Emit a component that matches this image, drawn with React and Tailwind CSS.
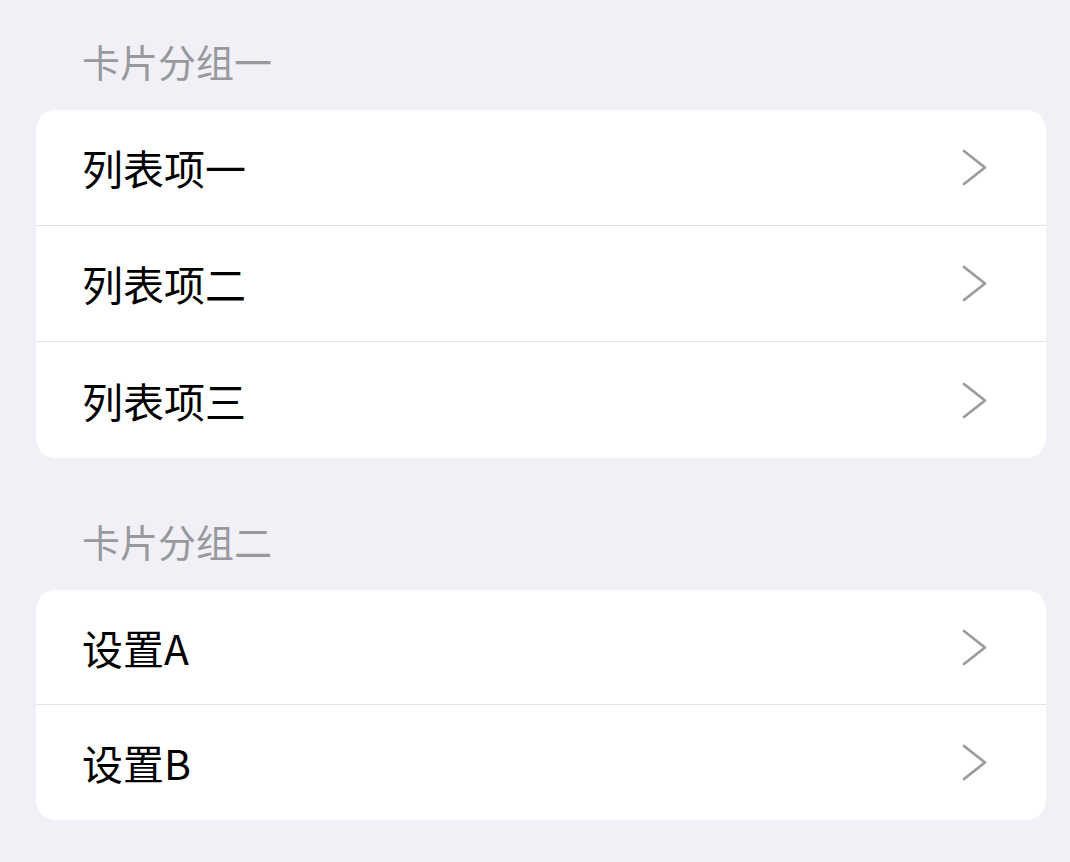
import React from "react";

const groups = [
  { title: "卡片分组一", rowH: "h-[116px]", items: ["列表项一", "列表项二", "列表项三"] },
  { title: "卡片分组二", rowH: "h-[115px]", items: ["设置A", "设置B"] },
];

const Chevron = () => (
  <svg width="27" height="37" viewBox="0 0 27 37" fill="none" className="shrink-0">
    <polyline
      points="3,2 24,18.5 3,35"
      stroke="#9b9ba0"
      strokeWidth="2.8"
      strokeLinecap="round"
      strokeLinejoin="round"
    />
  </svg>
);

const App = () => {
  return (
    <div
      className="min-h-[862px] w-full bg-[#f0f0f6] pl-[36px] pr-[24px] pt-[12px]"
      style={{ fontFamily: '"Noto Sans CJK SC", "Noto Sans", sans-serif' }}
    >
      {groups.map((group, gi) => (
        <section key={group.title} className={gi > 0 ? "mt-[34px]" : ""}>
          <div className="flex h-[98px] items-center pl-[46px] text-[38px] leading-none text-[#98989d]">
            {group.title}
          </div>
          <div className="overflow-hidden rounded-[20px] bg-white">
            {group.items.map((item, i) => (
              <div
                key={item}
                className={`flex ${group.rowH} items-center justify-between pl-[46px] pr-[58px] ${
                  i < group.items.length - 1 ? "border-b border-[#e3e3e8]" : ""
                }`}
              >
                <span className="text-[41px] leading-none text-black">{item}</span>
                <Chevron />
              </div>
            ))}
          </div>
        </section>
      ))}
    </div>
  );
};

export default App;
